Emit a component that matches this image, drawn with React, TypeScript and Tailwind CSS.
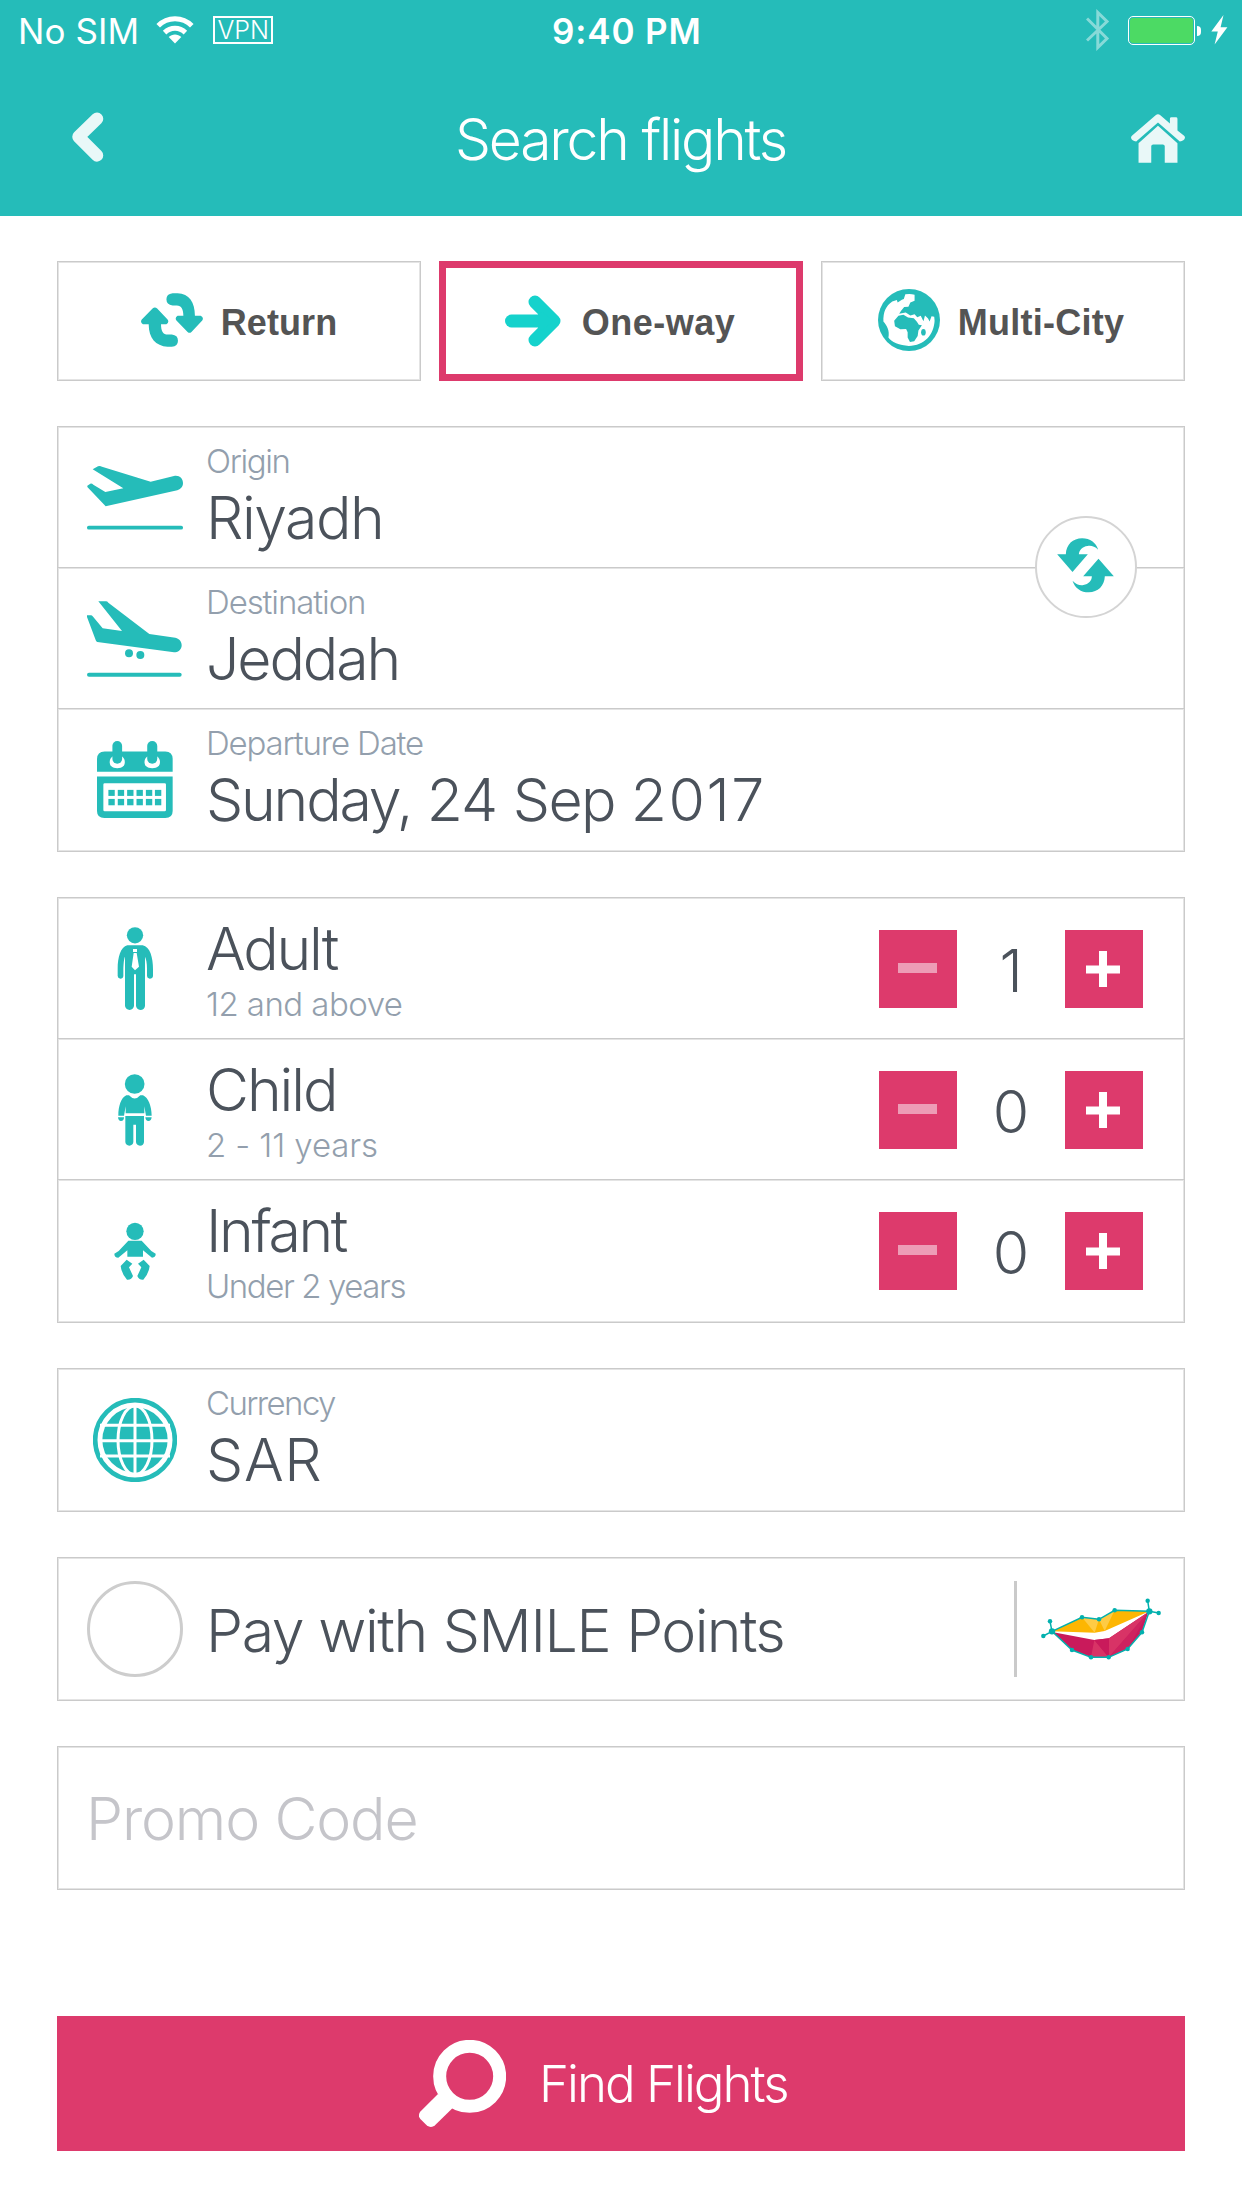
import React from "react";

const TEAL = "#25bcb9";

/* ---------- Status bar and header icons ---------- */

const Wifi = () => (
  <svg className="h-[28px] w-[38px]" viewBox="0 0 38 28" fill="none" stroke="#fff" strokeWidth="5">
    <path d="M2.2 9.8C11.5 0.4 26.5 0.4 35.8 9.8" />
    <path d="M8.6 16.6C14.6 10.8 23.4 10.8 29.4 16.6" />
    <path d="M19 27.6L12.7 21C16 17.6 22 17.6 25.3 21Z" fill="#fff" stroke="none" />
  </svg>
);

const Bluetooth = () => (
  <svg className="h-[42px] w-[24px]" viewBox="0 0 24 42" fill="none" stroke="#fff" strokeOpacity="0.45" strokeWidth="3">
    <path d="M1 9.5L21 29.5L11.8 38.5V3.5L21 12.5L1 31.5" />
  </svg>
);

const Bolt = () => (
  <svg className="h-[30px] w-[17px]" viewBox="0 0 17 30" fill="#fff">
    <path d="M12.5 0L0.3 16.4H6.8L3.6 29.6L16.4 12.2H9.6Z" />
  </svg>
);

const Back = () => (
  <svg className="h-[50px] w-[33px]" viewBox="0 0 33 50" fill="none" stroke="#e9f8f8" strokeWidth="12.5" strokeLinecap="round" strokeLinejoin="round">
    <path d="M26 6.8L7.5 24.8L26 43.4" />
  </svg>
);

const Home = () => (
  <svg className="h-[49px] w-[54px]" viewBox="1288 341 136 146" preserveAspectRatio="none" fill="#e9f8f8">
    <path d="M1288 412Q1288 408 1291 405L1350 345Q1356 339 1362 345L1386 369V355Q1386 351 1390 351H1401Q1405 351 1405 355V390L1421 405Q1424 408 1424 412Q1422 422 1411 423L1356 366L1301 423Q1290 422 1288 412Z" />
    <path d="M1356 376L1405 428V486H1373V437Q1373 432 1368 432H1344Q1339 432 1339 437V486H1307V428Z" />
  </svg>
);

/* ---------- Trip type icons ---------- */

const ReturnIcon = () => (
  <svg className="h-[54px] w-[62px]" viewBox="261 128 161 161" preserveAspectRatio="none" fill={TEAL}>
    <path d="M343 129H356C386 131 401 155 401 196H416Q425 201 420 210L392 244Q387 249 382 244L353 210Q348 201 356 196H371C371 176 366 165 354 165H343Q327 163 327 147Q327 131 343 129Z" />
    <path d="M341 288H330C299 286 281 262 281 221H266Q258 216 263 207L291 174Q297 168 303 174L330 207Q335 216 327 221H313C313 241 318 252 331 252H341Q357 254 357 270Q357 286 341 288Z" />
  </svg>
);

const ArrowIcon = () => (
  <svg className="h-[52px] w-[56px]" viewBox="0 0 56 52" fill="none" stroke="#15d2cc" strokeLinecap="round" strokeLinejoin="round">
    <path d="M6.5 26H44" strokeWidth="13" />
    <path d="M30 7L49 26L30 45" strokeWidth="13" />
    <path d="M36 20L44 26L36 32Z" fill="#15d2cc" strokeWidth="6" />
  </svg>
);

const EarthIcon = () => (
  <svg className="h-[62px] w-[62px]" viewBox="727 117 161 185" preserveAspectRatio="none">
    <ellipse cx="807.5" cy="209.5" rx="80.5" ry="92.5" fill={TEAL} />
    <path fill="#fff" d="M798 133Q810 130 822 134V152L811 157L806 170L795 171L787 182L782 191L799 187L811 196L822 192L829 201L838 197L845 213L849 196L857 205L861 214L866 198L873 200L874 212C872 254 848 286 807 287C784 286 760 275 754 262C758 242 750 226 741 214C740 185 748 167 764 154L776 150L778 157L789 149L794 147Z" />
    <path fill={TEAL} d="M780 197L793 194L805 202L820 204L828 215L833 224L841 225L832 241L830 257L821 273L810 275L804 262L804 246L800 236L785 237L771 228L769 212Z" />
    <ellipse cx="845" cy="246" rx="6" ry="10" fill={TEAL} />
  </svg>
);

/* ---------- Field icons ---------- */

const TakeOff = () => (
  <svg className="h-[64px] w-[96px]" viewBox="111 138 288 192" fill={TEAL}>
    <path d="M128 148L144 139Q150 137 156 140L302 185L372 168C388 165 399 175 399 190C399 201 391 208 382 211L167 259L112 201V197L121 191Q126 190 130 194L166 216L220 205Z" />
    <rect x="111" y="317" width="288" height="11.5" rx="5.5" />
  </svg>
);

const Landing = () => (
  <svg className="h-[76px] w-[96px]" viewBox="111 543 288 228" fill={TEAL}>
    <path d="M145 544H168Q172 544 175 548L298 642L376 653C389 656 396 666 395 678C393 690 384 697 372 697L142 666Q138 664 137 660L111 591V586H123Q126 586 128 589L158 625L216 633Z" />
    <circle cx="237" cy="700" r="12" />
    <circle cx="271" cy="705" r="12" />
    <rect x="111" y="758" width="284" height="12" rx="6" />
  </svg>
);

const Calendar = () => (
  <svg className="h-[77px] w-[76px]" viewBox="142 962 227 230" fill={TEAL}>
    <path d="M142 1054V1016Q142 993 165 993H346Q368 993 368 1016V1054Z" />
    <path fill="#fff" d="M188 1008C178 1015 178 1030 184 1037C193 1046 212 1046 221 1037C227 1030 227 1015 217 1008Z" />
    <path fill="#fff" d="M292 1008C282 1015 282 1030 288 1037C297 1046 317 1046 326 1037C332 1030 332 1015 322 1008Z" />
    <rect x="188" y="962" width="29" height="68" rx="14.5" />
    <rect x="292" y="962" width="30" height="68" rx="15" />
    <path fillRule="evenodd" d="M142 1068H368V1171Q368 1192 346 1192H164Q142 1192 142 1171ZM165 1088Q161 1088 161 1092V1168Q161 1172 165 1172H344Q348 1172 348 1168V1092Q348 1088 344 1088Z" />
    {[176, 204, 232, 260, 288, 315].map((x) => (
      <g key={x}>
        <rect x={x} y="1108" width="19" height="18" />
        <rect x={x} y="1135" width="19" height="19" />
      </g>
    ))}
  </svg>
);

const Adult = () => (
  <svg className="h-[84px] w-[38px]" viewBox="198 110 114 252" fill={TEAL}>
    <circle cx="255" cy="138" r="24.5" />
    <path d="M232 168H278C300 172 309 205 309 240V260Q308 268 299 268Q291 267 291 260V238C291 220 288 208 285 202V350Q283 362 271 362Q260 361 258 350V255H252V350Q250 361 239 362Q227 361 225 350V202C222 208 221 220 220 240V260Q219 268 211 268Q203 267 203 260V238C203 205 212 172 232 168Z" />
    <path fill="#fff" d="M249 179H261V188H249ZM251 191H260L267 232L255 243L245 232Z" />
  </svg>
);

const Child = () => (
  <svg className="h-[72px] w-[38px]" viewBox="197 553 114 216" fill={TEAL}>
    <circle cx="253" cy="583" r="29.5" />
    <path d="M228 617H236Q253 636 270 617H278C294 624 304 650 304 678H287L282 650V671H226V650L221 678H204C204 650 212 624 228 617Z" />
    <path d="M203 683H221Q221 694 212 694Q204 694 203 683ZM285 683H304Q303 694 294 694Q286 694 285 683Z" />
    <path d="M225 679H281V757Q280 768 269 768Q258 767 257 757V705H249V757Q248 767 237 768Q226 767 225 757Z" />
  </svg>
);

const Infant = () => (
  <svg className="h-[58px] w-[42px]" viewBox="191 994 126 174" fill={TEAL}>
    <circle cx="254" cy="1022" r="26" />
    <path d="M234 1050H274L303 1081L316 1089Q317 1099 305 1101L278 1079V1098H231V1079L204 1101Q192 1101 192 1089L205 1081Z" />
    <path d="M229 1107L246 1119L236 1130L248 1156Q244 1168 230 1167Q214 1150 211 1126Z" />
    <path d="M280 1107L263 1119L273 1130L261 1156Q265 1168 279 1167Q295 1150 298 1126Z" />
  </svg>
);

const Globe = () => (
  <svg className="h-[84px] w-[84px]" viewBox="129 113 252 252">
    <circle cx="255" cy="239" r="119.5" fill="none" stroke={TEAL} strokeWidth="14" />
    <circle cx="255" cy="239" r="98" fill={TEAL} />
    <g fill="none" stroke="#fff" strokeWidth="9">
      <path d="M255 135V345M150 241H360M150 195H360M150 287H360" />
      <ellipse cx="255" cy="240" rx="51" ry="103" />
    </g>
  </svg>
);

const Swap = () => (
  <svg className="h-[55px] w-[57px]" viewBox="171 142 170 165" fill={TEAL}>
    <path d="M171 191H197C198 162 218 143 246 143C270 143 287 156 294 177C283 166 272 164 262 166C247 168 237 178 236 191H263L217 244Z" />
    <path d="M341 257H314C313 286 293 305 266 305C242 305 224 292 217 270C228 282 240 285 250 283C265 281 275 271 275 257H249L295 204Z" />
  </svg>
);

const SmileLogo = () => (
  <svg className="h-[64px] w-[122px]" viewBox="180 140 366 192">
    <path fill="#fdb602" d="M216 243L306 201L357 207L404 180L508 183L374 242L344 247Z" />
    <path fill="#fecb45" d="M306 201L357 207L344 247ZM357 207L404 180L374 242Z" />
    <path fill="#c91a5b" d="M216 245L343 269L387 264L505 185L486 246L443 296L386 321H333L276 299Z" />
    <path fill="#d83366" d="M343 269L386 321H333ZM387 264L505 185L386 321Z" />
    <path fill="#c91a5b" d="M343 269L387 264L386 321Z" />
    <path fill="#d83366" d="M387 321L505 185L443 296Z" fillOpacity="0.35" />
    <g fill="none" stroke="#02b0ae" strokeWidth="4.5">
      <path d="M216 243L306 201L357 207L404 180L508 183L486 246L443 296L386 321H333L276 299Z" />
      <path d="M216 243L210 213M216 243L190 257M508 183L503 151M508 183L536 188" />
    </g>
    <g fill="#02b0ae">
      <circle cx="216" cy="243" r="9.5" />
      <circle cx="508" cy="183" r="9.5" />
      {[[210, 213], [190, 257], [503, 151], [536, 188], [306, 201], [357, 207], [404, 180], [486, 246], [443, 296], [386, 321], [333, 321], [276, 299]].map(([x, y]) => (
        <circle key={x} cx={x} cy={y} r="6.7" />
      ))}
    </g>
  </svg>
);

const Magnifier = () => (
  <svg className="h-[87px] w-[87px]" viewBox="57 120 261 261">
    <circle cx="209" cy="229" r="90" fill="none" stroke="#fff" strokeWidth="39" />
    <path fill="#fff" d="M114 282L158 324L105 376Q93 386 80 376L61 357Q52 346 62 334Z" />
  </svg>
);

/* ---------- Building blocks ---------- */

const card = "border border-[#cacaca] bg-white shadow-[inset_0_0_0_1px_#e4e4e4]";

function IconCell({ children }: { children: React.ReactNode }) {
  return <div className="ml-[29px] mr-[23px] flex w-[96px] shrink-0 items-center justify-center">{children}</div>;
}

function Row({ icon, last, children }: { icon: React.ReactNode; last?: boolean; children: React.ReactNode }) {
  return (
    <div className={last ? "flex h-[142px]" : "flex h-[141px] border-b border-[#cacaca] shadow-[0_1px_0_#e4e4e4]"}>
      <IconCell>{icon}</IconCell>
      {children}
    </div>
  );
}

function Field({ label, value, labelClass, valueClass }: { label: string; value: React.ReactNode; labelClass: string; valueClass: string }) {
  return (
    <div className="flex flex-col whitespace-nowrap pt-[14px] font-light">
      <span className={`text-[33px] leading-[40px] text-[#939fad] ${labelClass}`}>{label}</span>
      <span className={`text-[59px] leading-[73px] text-[#4b525b] ${valueClass}`}>{value}</span>
    </div>
  );
}

function Passenger({ label, hint, count, labelClass, hintClass }: { label: string; hint: string; count: number; labelClass: string; hintClass: string }) {
  return (
    <>
      <div className="flex flex-1 flex-col whitespace-nowrap pt-[16px] font-light">
        <span className={`text-[59px] leading-[70px] text-[#4b525b] ${labelClass}`}>{label}</span>
        <span className={`text-[33px] leading-[40px] text-[#939fad] ${hintClass}`}>{hint}</span>
      </div>
      <div className="mr-[41px] mt-[32px] flex h-[78px]">
        <button className="flex h-[78px] w-[78px] justify-center bg-[#dd3a6c] pr-px pt-[33px]">
          <span className="h-[10px] w-[39px] bg-[#ed9cb6]" />
        </button>
        <span className="w-[108px] pt-[2px] text-center text-[59px] font-light leading-[78px] text-[#4b525b]">{count}</span>
        <button className="flex h-[78px] w-[78px] items-center justify-center bg-[#dd3a6c]">
          <svg className="mr-[2px] h-[36px] w-[34px]" viewBox="0 0 34 36" fill="#fff">
            <path d="M13 0H21V14.5H34V22.5H21V36H13V22.5H0V14.5H13Z" />
          </svg>
        </button>
      </div>
    </>
  );
}

const tab = "flex h-[120px] w-[364px] items-center justify-center";
const tabText = "whitespace-nowrap pt-[3px] font-['Liberation_Sans',sans-serif] text-[36px] font-bold leading-[40px] text-[#545454]";

export default function App() {
  return (
    <div className="flex h-[2208px] w-[1242px] flex-col overflow-hidden bg-white font-[Inter,sans-serif]">
      <header className="h-[216px] bg-[#25bcb9] text-white">
        <div className="flex h-[60px] items-center pr-[14px]">
          <div className="flex w-[552px] items-center pl-[18px]">
            <span className="pt-[3px] text-[35px] leading-[57px] tracking-[0.1px]">No SIM</span>
            <div className="ml-[17px]"><Wifi /></div>
            <div className="ml-[19px] flex h-[28px] w-[60px] items-center justify-center border-2 border-white text-[25px] font-light leading-[24px]">VPN</div>
          </div>
          <span className="pt-[3px] text-[35px] font-semibold leading-[57px] tracking-[0.84px]">9:40 PM</span>
          <div className="ml-auto flex items-center">
            <Bluetooth />
            <div className="ml-[18px] h-[29px] w-[67px] rounded-[5px] border border-white p-px">
              <div className="h-full w-full rounded-[3px] bg-[#4cda64]" />
            </div>
            <div className="ml-[2px] mt-[2px] h-[10px] w-[4px] rounded-r-full bg-white" />
            <div className="ml-[10px]"><Bolt /></div>
          </div>
        </div>
        <div className="flex h-[156px] items-center justify-between pl-[71px] pr-[57px]">
          <div className="w-[54px] pb-[2px]"><Back /></div>
          <h1 className="mr-[15px] whitespace-nowrap pt-[3px] text-[57px] font-light leading-[80px] tracking-[-2.2px]">Search flights</h1>
          <Home />
        </div>
      </header>

      <main className="flex flex-col px-[57px] pt-[45px]">
        <div className="flex gap-[18px]">
          <button className={`${tab} ${card} gap-[18px]`}>
            <div className="pb-[3px]"><ReturnIcon /></div>
            <span className={`${tabText} tracking-[0.1px]`}>Return</span>
          </button>
          <button className={`${tab} gap-[21px] border-[7px] border-[#dd3a6c] pr-[2px]`}>
            <ArrowIcon />
            <span className={`${tabText} tracking-[0.5px]`}>One-way</span>
          </button>
          <button className={`${tab} ${card} gap-[18px] pr-[4px]`}>
            <div className="pb-[2px]"><EarthIcon /></div>
            <span className={`${tabText} tracking-[0.26px]`}>Multi-City</span>
          </button>
        </div>

        <section className={`relative mt-[45px] ${card}`}>
          <Row icon={<div className="pt-px"><TakeOff /></div>}>
            <Field label="Origin" value="Riyadh" labelClass="tracking-[-1.4px]" valueClass="tracking-[-1.5px]" />
          </Row>
          <Row icon={<div className="pt-px"><Landing /></div>}>
            <Field label="Destination" value="Jeddah" labelClass="tracking-[-1.1px]" valueClass="tracking-[-2.1px]" />
          </Row>
          <Row last icon={<div className="pb-[2px]"><Calendar /></div>}>
            <Field
              label="Departure Date"
              value={
                <>
                  <span className="tracking-[-2.2px]">Sunday,</span> 24 <span className="tracking-[-1.5px]">Sep</span>{" "}
                  <span className="tracking-[1.6px]">2017</span>
                </>
              }
              labelClass="tracking-[-1.15px]"
              valueClass="tracking-[-1.04px]"
            />
          </Row>
          <button className="absolute right-[47px] top-[89px] flex h-[102px] w-[102px] items-center justify-center rounded-full border-2 border-[#d4d4d4] bg-white pb-[3px] pr-[2px]">
            <Swap />
          </button>
        </section>

        <section className={`mt-[45px] ${card}`}>
          <Row icon={<Adult />}>
            <Passenger label="Adult" hint="12 and above" count={1} labelClass="tracking-[-2.2px]" hintClass="tracking-[-0.55px]" />
          </Row>
          <Row icon={<div className="pt-[2px]"><Child /></div>}>
            <Passenger label="Child" hint="2 - 11 years" count={0} labelClass="tracking-[-2.06px]" hintClass="tracking-[-0.1px]" />
          </Row>
          <Row last icon={<Infant />}>
            <Passenger label="Infant" hint="Under 2 years" count={0} labelClass="tracking-[-2.4px]" hintClass="tracking-[-1.42px]" />
          </Row>
        </section>

        <section className={`mt-[45px] ${card}`}>
          <Row last icon={<Globe />}>
            <Field label="Currency" value="SAR" labelClass="tracking-[-1.6px]" valueClass="tracking-[0.6px]" />
          </Row>
        </section>

        <section className={`mt-[45px] flex h-[144px] items-center ${card}`}>
          <IconCell>
            <div className="h-[96px] w-[96px] rounded-full border-[3px] border-[#cdcdcd]" />
          </IconCell>
          <span className="flex-1 whitespace-nowrap pt-[3px] text-[59px] font-light leading-[70px] tracking-[-0.9px] text-[#4b525b]">
            <span className="tracking-[-1.4px]">Pay with</span> <span className="tracking-[-1.3px]">SMILE</span> <span className="tracking-[-1.6px]">Points</span>
          </span>
          <div className="h-[96px] w-[3px] bg-[#cacaca]" />
          <div className="ml-[23px] mr-[22px]"><SmileLogo /></div>
        </section>

        <section className={`mt-[45px] flex h-[144px] items-center pl-[28px] ${card}`}>
          <span className="whitespace-nowrap pt-[2px] text-[59px] font-light leading-[70px] tracking-[-1.15px] text-[#c5c5ca]">Promo Code</span>
        </section>

        <button className="mt-[126px] flex h-[135px] items-center bg-[#dd3a6c] pl-[362px] text-white">
          <Magnifier />
          <span className="ml-[33px] whitespace-nowrap pt-px text-[51px] font-light leading-[60px] tracking-[-2px]">Find Flights</span>
        </button>
      </main>
    </div>
  );
}
